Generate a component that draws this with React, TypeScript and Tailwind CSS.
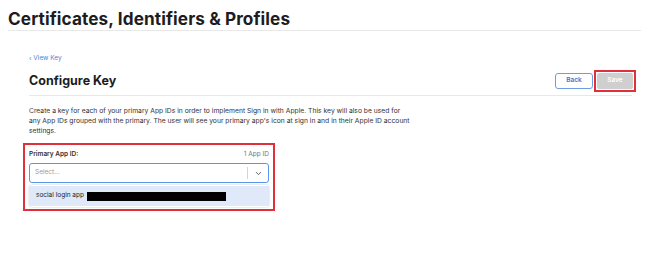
import React from 'react';
import { ChevronDown } from 'lucide-react';

const App: React.FC = () => {
  return (
    <div className="w-[668px] h-[262px] bg-white overflow-hidden text-[#1d1d1f]" style={{ fontFamily: 'Inter, "Liberation Sans", sans-serif' }}>
      <div className="pl-2 pr-[27px] pt-[9px]">
        <h1 className="text-[17.2px] font-bold leading-[20px] tracking-[0.1px]">Certificates, Identifiers &amp; Profiles</h1>
        <div className="mt-[1px] h-px bg-[#e8e8e8]"></div>
      </div>

      <div className="pl-[29px] pr-[32px]">
        <div className="mt-[23px] text-[6.5px] leading-[8px] text-[#4a86d8]">‹ View Key</div>

        <div className="flex items-center justify-between mt-[8px] h-[22px]">
          <h2 className="text-[12.5px] font-bold leading-[16px]">Configure Key</h2>
          <div className="flex items-center gap-[1px]">
            <button className="block w-[38px] h-[16px] rounded-[3px] border border-[#6b9ee0] text-[6.5px] font-semibold text-[#3b78d0] bg-white">Back</button>
            <div className="border-2 border-[#e0303c] p-px">
              <button className="block w-[36px] h-[16px] rounded-[2px] bg-[#cfcfcf] text-[6.5px] font-semibold text-white">Save</button>
            </div>
          </div>
        </div>
        <div className="mt-[3px] mr-[4px] h-px bg-[#e8e8e8]"></div>

        <p className="mt-[10px] w-[420px] text-[6.75px] leading-[10px] text-[#333]">
          Create a key for each of your primary App IDs in order to implement Sign in with Apple. This key will also be used for
          <br />
          any App IDs grouped with the primary. The user will see your primary app's icon at sign in and in their Apple ID account
          <br />
          settings.
        </p>

        <div className="mt-[7px] -ml-[6px] w-[252px] border-2 border-[#e0303c] px-[4px] pt-[4px] pb-[2px]">
          <div className="flex items-center justify-between text-[6.5px] leading-[10px]">
            <span className="font-semibold text-[#333]">Primary App ID:</span>
            <span className="text-[#777]">1 App ID</span>
          </div>
          <div className="mt-[4px] h-[20px] rounded-[3px] border border-[#5b95ea] flex items-center">
            <span className="flex-1 pl-[5px] text-[6.5px] text-[#9a9a9a]">Select...</span>
            <div className="w-px h-[12px] bg-[#d4d4d4]"></div>
            <div className="w-[20px] flex items-center justify-center">
              <ChevronDown size={9} strokeWidth={2.5} className="text-[#555]" />
            </div>
          </div>
          <div className="mt-[2px] rounded-[3px] shadow-[0_0_2px_rgba(0,0,0,0.25)] bg-white py-[1px]">
            <div className="h-[20px] bg-[#dfe9f9] flex items-center pl-[7px] gap-[3px] text-[6.5px] text-[#222]">
              <span>social login app</span>
              <div className="w-[139px] h-[9px] bg-black"></div>
            </div>
          </div>
        </div>
      </div>
    </div>
  );
};

export default App;
